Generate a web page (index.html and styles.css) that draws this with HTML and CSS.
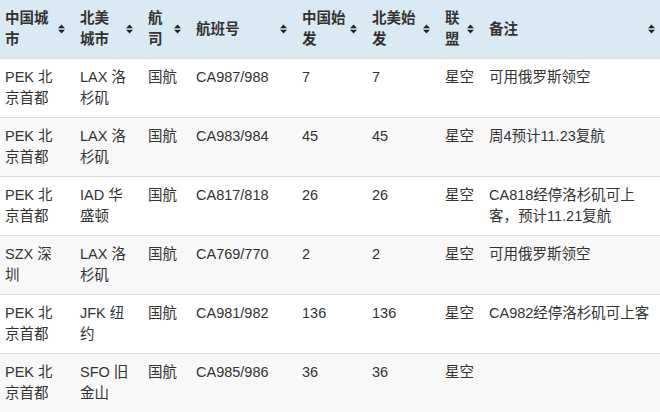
FILE: index.html
```html
<!DOCTYPE html>
<html lang="zh">
<head>
<meta charset="utf-8">
<title>航班表</title>
<link rel="stylesheet" href="styles.css">
</head>
<body>
<table class="flights">
  <colgroup>
    <col class="c1"><col class="c2"><col class="c3"><col class="c4">
    <col class="c5"><col class="c6"><col class="c7"><col class="c8">
  </colgroup>
  <thead>
    <tr>
      <th><div class="th-inner"><span class="th-text">中国城市</span><svg class="sort" viewBox="0 0 7 10"><path d="M3.5 0.5 L7 4.2 H0 Z M0 5.8 H7 L3.5 9.5 Z"/></svg></div></th>
      <th><div class="th-inner"><span class="th-text">北美城市</span><svg class="sort" viewBox="0 0 7 10"><path d="M3.5 0.5 L7 4.2 H0 Z M0 5.8 H7 L3.5 9.5 Z"/></svg></div></th>
      <th><div class="th-inner"><span class="th-text">航司</span><svg class="sort" viewBox="0 0 7 10"><path d="M3.5 0.5 L7 4.2 H0 Z M0 5.8 H7 L3.5 9.5 Z"/></svg></div></th>
      <th><div class="th-inner"><span class="th-text">航班号</span><svg class="sort" viewBox="0 0 7 10"><path d="M3.5 0.5 L7 4.2 H0 Z M0 5.8 H7 L3.5 9.5 Z"/></svg></div></th>
      <th><div class="th-inner"><span class="th-text">中国始发</span><svg class="sort" viewBox="0 0 7 10"><path d="M3.5 0.5 L7 4.2 H0 Z M0 5.8 H7 L3.5 9.5 Z"/></svg></div></th>
      <th><div class="th-inner"><span class="th-text">北美始发</span><svg class="sort" viewBox="0 0 7 10"><path d="M3.5 0.5 L7 4.2 H0 Z M0 5.8 H7 L3.5 9.5 Z"/></svg></div></th>
      <th><div class="th-inner"><span class="th-text">联盟</span><svg class="sort" viewBox="0 0 7 10"><path d="M3.5 0.5 L7 4.2 H0 Z M0 5.8 H7 L3.5 9.5 Z"/></svg></div></th>
      <th class="last"><div class="th-inner"><span class="th-text">备注</span><svg class="sort" viewBox="0 0 7 10"><path d="M3.5 0.5 L7 4.2 H0 Z M0 5.8 H7 L3.5 9.5 Z"/></svg></div></th>
    </tr>
  </thead>
  <tbody>
    <tr>
      <td>PEK 北京首都</td><td>LAX 洛杉矶</td><td>国航</td><td>CA987/988</td><td>7</td><td>7</td><td>星空</td><td class="last">可用俄罗斯领空</td>
    </tr>
    <tr>
      <td>PEK 北京首都</td><td>LAX 洛杉矶</td><td>国航</td><td>CA983/984</td><td>45</td><td>45</td><td>星空</td><td class="last">周4预计11.23复航</td>
    </tr>
    <tr>
      <td>PEK 北京首都</td><td>IAD 华盛顿</td><td>国航</td><td>CA817/818</td><td>26</td><td>26</td><td>星空</td><td class="last">CA818经停洛杉矶可上客，预计11.21复航</td>
    </tr>
    <tr>
      <td>SZX 深圳</td><td>LAX 洛杉矶</td><td>国航</td><td>CA769/770</td><td>2</td><td>2</td><td>星空</td><td class="last">可用俄罗斯领空</td>
    </tr>
    <tr>
      <td>PEK 北京首都</td><td>JFK 纽约</td><td>国航</td><td>CA981/982</td><td>136</td><td>136</td><td>星空</td><td class="last">CA982经停洛杉矶可上客</td>
    </tr>
    <tr>
      <td>PEK 北京首都</td><td>SFO 旧金山</td><td>国航</td><td>CA985/986</td><td>36</td><td>36</td><td>星空</td><td class="last"></td>
    </tr>
  </tbody>
</table>
</body>
</html>
```

FILE: styles.css
```css
html, body {
  margin: 0;
  padding: 0;
  background: #ffffff;
}

body {
  font-family: "Liberation Sans", Arial, "Noto Sans CJK SC", sans-serif;
  font-size: 14.5px;
  line-height: 21px;
  color: #333333;
}

.flights {
  width: 660px;
  table-layout: fixed;
  border-collapse: collapse;
  border-spacing: 0;
}

.c1 { width: 75px; }
.c2 { width: 68px; }
.c3 { width: 48px; }
.c4 { width: 106px; }
.c5 { width: 70px; }
.c6 { width: 73px; }
.c7 { width: 44px; }
.c8 { width: 176px; }

.flights th {
  background: #d9eaf4;
  padding: 8px 10px 8px 5px;
  text-align: left;
  font-weight: bold;
  color: #333333;
  vertical-align: middle;
  border-bottom: 0;
}

.flights th.last {
  padding-right: 5px;
}

.th-inner {
  display: flex;
  align-items: center;
  gap: 3px;
}

.th-text {
  flex: 1 1 auto;
  min-width: 0;
}

.sort {
  flex: 0 0 auto;
  width: 7px;
  height: 10px;
  fill: #222222;
}

.flights td {
  padding: 8px 10px 8px 5px;
  vertical-align: top;
  border-top: 1px solid #dedede;
}

.flights td.last {
  padding-right: 5px;
}

.flights tbody tr:nth-child(even) td {
  background: #f8f8f8;
}
```
